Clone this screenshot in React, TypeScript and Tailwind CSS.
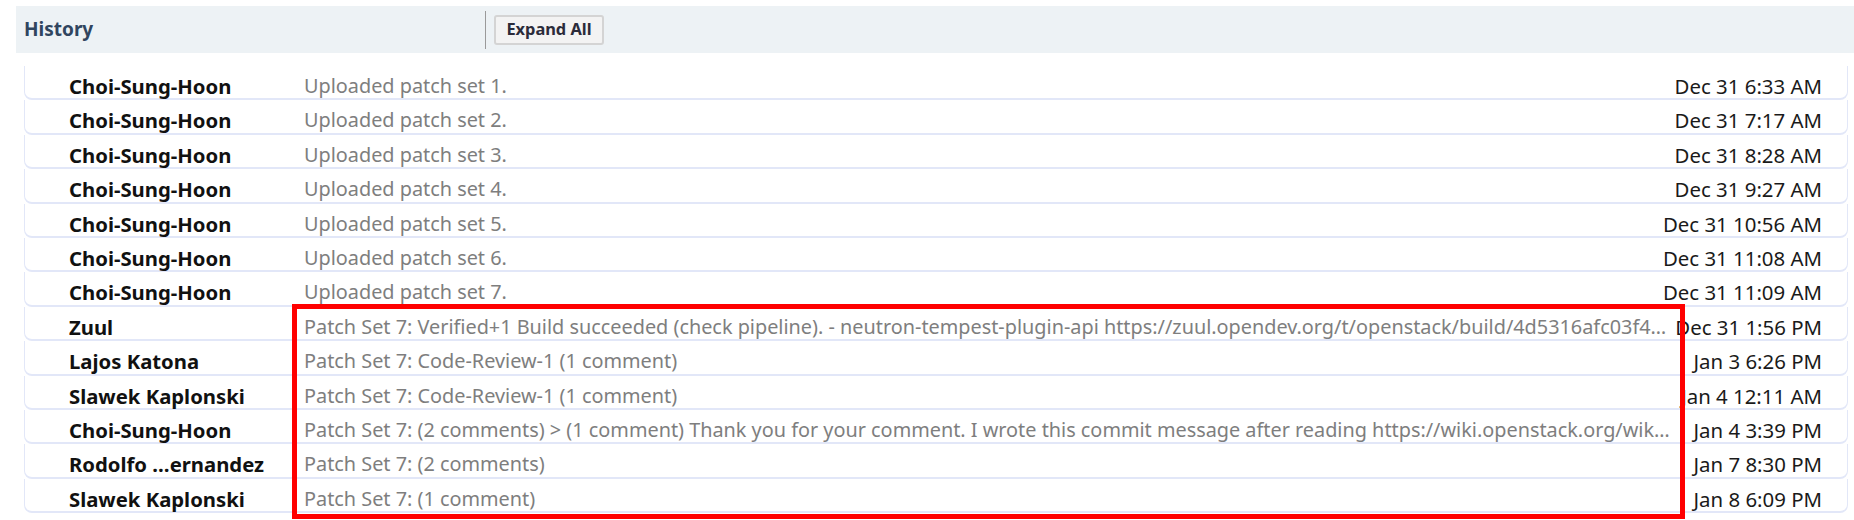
import React from "react";

type Row = { name: string; msg: string; date: string };

const rows: Row[] = [
  { name: "Choi-Sung-Hoon", msg: "Uploaded patch set 1.", date: "Dec 31 6:33 AM" },
  { name: "Choi-Sung-Hoon", msg: "Uploaded patch set 2.", date: "Dec 31 7:17 AM" },
  { name: "Choi-Sung-Hoon", msg: "Uploaded patch set 3.", date: "Dec 31 8:28 AM" },
  { name: "Choi-Sung-Hoon", msg: "Uploaded patch set 4.", date: "Dec 31 9:27 AM" },
  { name: "Choi-Sung-Hoon", msg: "Uploaded patch set 5.", date: "Dec 31 10:56 AM" },
  { name: "Choi-Sung-Hoon", msg: "Uploaded patch set 6.", date: "Dec 31 11:08 AM" },
  { name: "Choi-Sung-Hoon", msg: "Uploaded patch set 7.", date: "Dec 31 11:09 AM" },
  {
    name: "Zuul",
    msg: "Patch Set 7: Verified+1 Build succeeded (check pipeline). - neutron-tempest-plugin-api https://zuul.opendev.org/t/openstack/build/4d5316afc03f4…",
    date: "Dec 31 1:56 PM",
  },
  { name: "Lajos Katona", msg: "Patch Set 7: Code-Review-1 (1 comment)", date: "Jan 3 6:26 PM" },
  { name: "Slawek Kaplonski", msg: "Patch Set 7: Code-Review-1 (1 comment)", date: "Jan 4 12:11 AM" },
  {
    name: "Choi-Sung-Hoon",
    msg: "Patch Set 7: (2 comments) > (1 comment) Thank you for your comment. I wrote this commit message after reading https://wiki.openstack.org/wik…",
    date: "Jan 4 3:39 PM",
  },
  { name: "Rodolfo …ernandez", msg: "Patch Set 7: (2 comments)", date: "Jan 7 8:30 PM" },
  { name: "Slawek Kaplonski", msg: "Patch Set 7: (1 comment)", date: "Jan 8 6:09 PM" },
];

export default function App() {
  return (
    <div
      className="relative w-[1854px] h-[520px] overflow-hidden bg-white pt-[6px]"
      style={{ fontFamily: '"Noto Sans", "Open Sans", Arial, sans-serif' }}
    >
      <div className="ml-[16px] h-[47px] bg-[#edf2f5] flex items-center">
        <div className="w-[469px] pl-[8px] text-[19px] font-bold text-[#30455f] leading-none">History</div>
        <div className="w-px h-[38px] bg-[#9a9a9a]" />
        <button className="ml-[8px] h-[30px] w-[110px] border-2 border-[#d4d4d4] rounded-[3px] bg-[#f3f3f3] text-[16.4px] font-bold text-[#2b2b3a] leading-none flex items-center justify-center">
          Expand All
        </button>
      </div>
      <div className="mt-[13px] ml-[24px] mr-[6px] flex flex-col">
        {rows.map((r, i) => (
          <div
            key={i}
            className="h-[34.4px] border-x border-b-2 border-[#e2e7f8] rounded-b-[8px] grid grid-cols-[235px_1fr_146px] items-start pl-[44px] pr-[25px] pt-[6px] leading-[28px] whitespace-nowrap"
          >
            <div className="font-bold text-[20.3px] text-[#111]">{r.name}</div>
            <div className="min-w-0 overflow-hidden text-ellipsis text-[19.85px] text-[#7e7e7e]">{r.msg}</div>
            <div className="flex justify-end text-[20.4px] text-[#1a1a1a]">
              <span>{r.date}</span>
            </div>
          </div>
        ))}
      </div>
      <div className="absolute left-[292px] top-[304px] w-[1393px] h-[215px] border-[5px] border-[#ff0000] pointer-events-none" />
    </div>
  );
}
